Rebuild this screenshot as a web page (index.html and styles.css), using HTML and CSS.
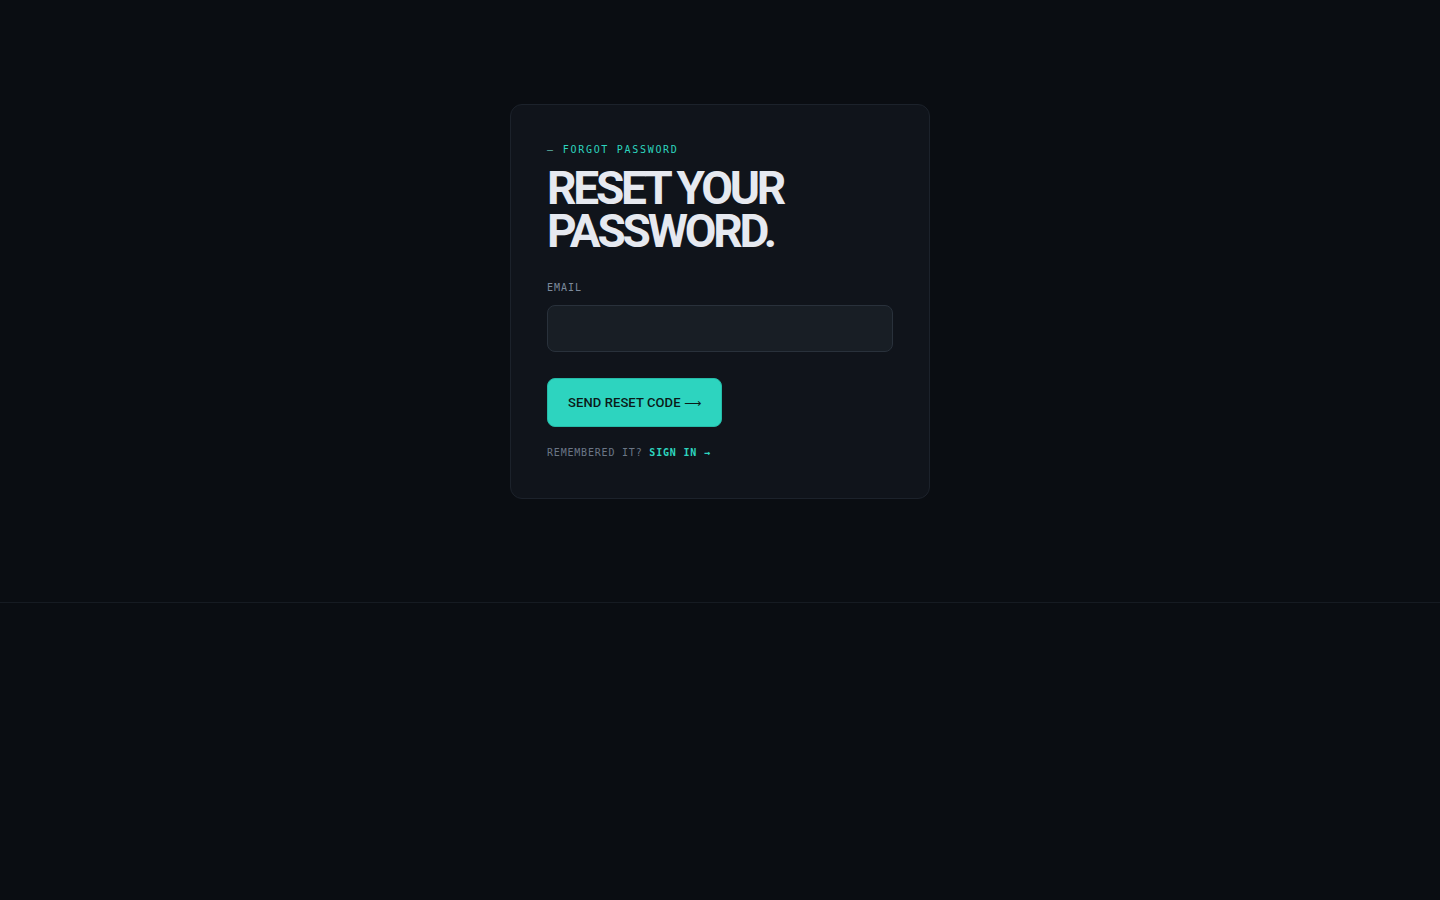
FILE: index.html
```html
<!DOCTYPE html>
<html lang="en">
<head>
<meta charset="utf-8">
<title>Reset your password</title>
<link rel="stylesheet" href="styles.css">
</head>
<body>
<main class="hero">
  <section class="card">
    <p class="eyebrow"><span class="dash">—</span> FORGOT PASSWORD</p>
    <h1 class="title"><span class="line">RESET YOUR</span><span class="line">PASSWORD.</span></h1>
    <form class="form">
      <label class="label" for="email">EMAIL</label>
      <input class="input" id="email" type="email">
      <button class="btn" type="button">SEND RESET CODE <span class="arrow">⟶</span></button>
    </form>
    <p class="foot">REMEMBERED IT? <a class="link" href="#">SIGN IN →</a></p>
  </section>
</main>
</body>
</html>
```
FILE: styles.css
```css
* { box-sizing: border-box; }
html, body { margin: 0; padding: 0; }
body {
  background: #0a0d12;
  font-family: Inter, "Liberation Sans", sans-serif;
  color: #e6e9ef;
  min-height: 900px;
}
.hero {
  height: 603px;
  border-bottom: 1px solid #161b22;
  display: flex;
  align-items: center;
  justify-content: center;
}
.card {
  width: 420px;
  background: #10141b;
  border: 1px solid #1c222b;
  border-radius: 12px;
  padding: 36px 36px 38px;
}
.eyebrow {
  margin: 2px 0 0;
  font-family: "DejaVu Sans Mono", monospace;
  font-size: 10px;
  line-height: 14px;
  letter-spacing: 1.7px;
  color: #2dd4bf;
}
.eyebrow .dash { color: #5fb8a9; letter-spacing: 0; margin-right: 2px; }
.title {
  margin: 10px 0 0;
  font-family: Roboto, "Liberation Sans", sans-serif;
  font-weight: 700;
  font-size: 46px;
  letter-spacing: -3.2px;
  color: #e6e9f0;
  display: flex;
  flex-direction: column;
}
.title .line { display: block; height: 43px; line-height: 43px; }
.form { display: flex; flex-direction: column; align-items: flex-start; margin-top: 28px; }
.label {
  font-family: "DejaVu Sans Mono", monospace;
  font-size: 10px;
  line-height: 14px;
  letter-spacing: 1px;
  color: #7d8a9c;
}
.input {
  margin-top: 10px;
  width: 100%;
  height: 47px;
  background: #181e25;
  border: 1px solid #29313b;
  border-radius: 8px;
  outline: none;
  color: #e6e9ef;
  padding: 0 14px;
}
.btn {
  margin-top: 26px;
  height: 49px;
  padding: 0 20px;
  background: #2dd4bf;
  color: #0b1a18;
  border: 1px solid #25bba8;
  border-radius: 8px;
  font-family: Roboto, "Liberation Sans", sans-serif;
  font-weight: 500;
  font-size: 13px;
  letter-spacing: 0.1px;
  cursor: pointer;
}
.btn .arrow { font-family: "DejaVu Sans", sans-serif; font-size: 12px; }
.foot {
  margin: 19px 0 0;
  font-family: "DejaVu Sans Mono", monospace;
  font-size: 10px;
  line-height: 14px;
  letter-spacing: 0.8px;
  color: #6b7686;
}
.link { color: #2dd4bf; font-weight: bold; text-decoration: none; }
```
